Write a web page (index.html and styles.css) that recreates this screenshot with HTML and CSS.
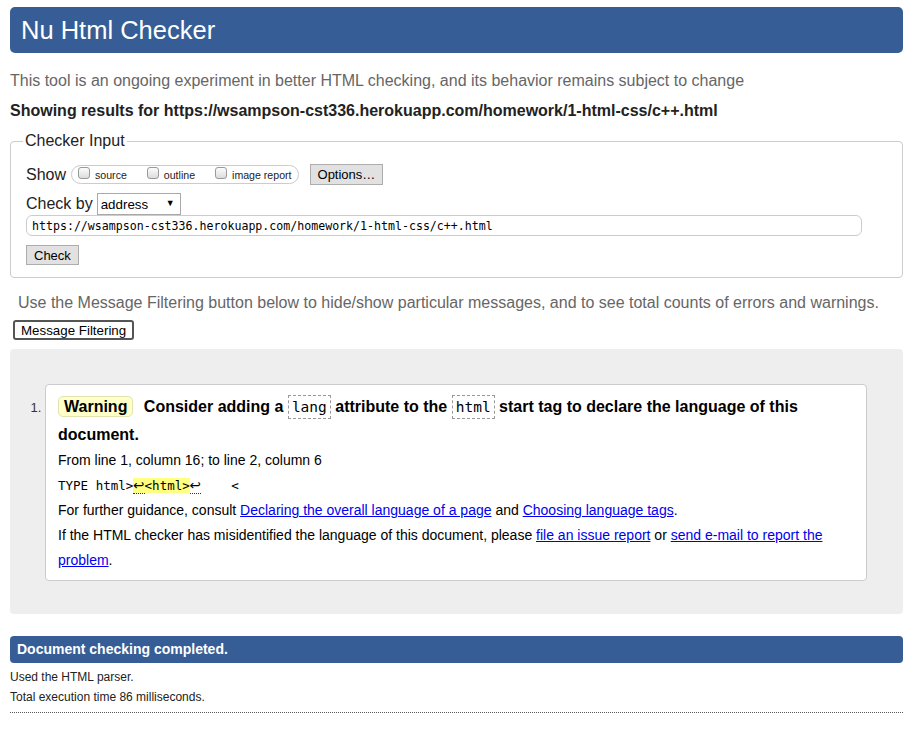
FILE: index.html
```html
<!DOCTYPE html>
<html lang="en">
<head>
<meta charset="utf-8">
<title>Nu Html Checker</title>
<link rel="stylesheet" href="styles.css">
</head>
<body>
<h1 class="title">Nu Html Checker</h1>
<p class="intro">This tool is an ongoing experiment in better HTML checking, and its behavior remains subject to change</p>
<p class="showing">Showing results for https://wsampson-cst336.herokuapp.com/homework/1-html-css/c++.html</p>
<form class="input-form">
  <fieldset class="checker">
    <legend class="legend">Checker Input</legend>
    <div class="row show-row">
      <span class="row-label show-label">Show</span>
      <span class="toggles">
        <label class="toggle"><input type="checkbox" class="cb"><span>source</span></label>
        <label class="toggle"><input type="checkbox" class="cb"><span>outline</span></label>
        <label class="toggle"><input type="checkbox" class="cb"><span>image report</span></label>
      </span>
      <button type="button" class="btn options">Options…</button>
    </div>
    <div class="row by-row">
      <span class="row-label by-label">Check by</span>
      <span class="select-wrap"><select class="select"><option>address</option></select></span>
    </div>
    <input class="url" type="text" value="https://wsampson-cst336.herokuapp.com/homework/1-html-css/c++.html">
    <button type="button" class="btn check">Check</button>
  </fieldset>
</form>
<p class="filter-note">Use the Message Filtering button below to hide/show particular messages, and to see total counts of errors and warnings.</p>
<button type="button" class="filter">Message Filtering</button>
<section class="results">
  <ol class="messages">
    <li class="msg">
      <p class="msg-head"><strong class="badge">Warning</strong> Consider adding a <code class="kw">lang</code> attribute to the <code class="kw">html</code> start tag to declare the language of this document.</p>
      <p class="loc">From line 1, column 16; to line 2, column 6</p>
      <p class="extract"><code class="src">TYPE html&gt;<mark class="hl"><span class="lf">↩</span>&lt;html&gt;</mark><span class="lf">↩</span>    &lt;</code></p>
      <p>For further guidance, consult <a href="#">Declaring the overall language of a page</a> and <a href="#">Choosing language tags</a>.</p>
      <p>If the HTML checker has misidentified the language of this document, please <a href="#">file an issue report</a> or <a href="#">send e-mail to report the problem</a>.</p>
    </li>
  </ol>
</section>
<p class="done">Document checking completed.</p>
<p class="stat first">Used the HTML parser.</p>
<p class="stat">Total execution time 86 milliseconds.</p>
<hr class="dots">
</body>
</html>
```
FILE: styles.css
```css
body {
  margin: 0;
  padding: 7px 16px 20px 10px;
  font-family: "Liberation Sans", Arial, sans-serif;
  color: #000;
  background: #fff;
}

.title {
  margin: 0;
  height: 46px;
  line-height: 46px;
  padding: 0 11px;
  font-size: 25.5px;
  font-weight: normal;
  color: #fff;
  background: #365d95;
  border-radius: 5px;
}

.intro {
  margin: 18px 0 0;
  font-size: 16px;
  line-height: 20px;
  color: #666;
}

.showing {
  margin: 10px 0 0;
  font-size: 16px;
  font-weight: bold;
  line-height: 20px;
  color: #222;
}

.input-form {
  margin: 11px 0 0;
}

.checker {
  margin: 0;
  padding: 14px 15px 12px;
  border: 1px solid #ccc;
  border-radius: 4px;
  min-width: 0;
}

.legend {
  padding: 0 2px;
  margin-left: -3px;
  font-size: 16px;
  line-height: 18px;
  color: #222;
}

.row {
  display: flex;
  align-items: center;
}

.row-label {
  font-size: 16px;
  color: #222;
}

.show-label {
  margin-right: 5px;
}

.by-label {
  margin-right: 4px;
}

.show-row {
  height: 21px;
}

.toggles {
  display: inline-flex;
  align-items: center;
  height: 17px;
  border: 1px solid #ccc;
  border-radius: 10px;
  padding: 0 6px;
}

.toggle {
  display: inline-flex;
  align-items: center;
  font-size: 10.6px;
  color: #222;
  margin-right: 20px;
}

.toggle:last-child {
  margin-right: 0;
}

.cb {
  appearance: none;
  -webkit-appearance: none;
  width: 12px;
  height: 12px;
  margin: 0 5px 4px 0;
  border: 1px solid #999;
  border-radius: 3px;
  background: linear-gradient(#fcfcfc, #dcdcdc);
  box-sizing: border-box;
}

.btn {
  font-family: "Liberation Sans", Arial, sans-serif;
  font-size: 13px;
  background: #e1e1e1;
  border: 1px solid #adadad;
  color: #000;
  border-radius: 0;
  padding: 0 7px;
  height: 21px;
}

.options {
  margin-left: 11px;
}

.by-row {
  margin-top: 8px;
}

.select-wrap {
  position: relative;
  display: inline-block;
  height: 22px;
}

.select-wrap::after {
  content: "▼";
  position: absolute;
  right: 6px;
  top: 5px;
  font-size: 9px;
  color: #000;
  pointer-events: none;
}

.select {
  appearance: none;
  -webkit-appearance: none;
  width: 84px;
  height: 22px;
  margin: 0;
  border: 1px solid #a9a9a9;
  border-radius: 0;
  padding: 0 0 0 3px;
  font-family: "Liberation Sans", Arial, sans-serif;
  font-size: 13.33px;
  background: #fff;
  color: #000;
}

.url {
  display: block;
  box-sizing: border-box;
  width: 836px;
  height: 21px;
  margin: 0;
  padding: 0 5px;
  border: 1px solid #ccc;
  border-radius: 6px;
  font-family: "DejaVu Sans Mono", monospace;
  font-size: 11.6px;
  color: #000;
}

.check {
  display: block;
  margin-top: 9px;
  height: 20px;
}

.filter-note {
  margin: 15px 0 0;
  padding-left: 8px;
  font-size: 16px;
  line-height: 20px;
  color: #666;
}

.filter {
  display: block;
  margin: 7px 0 0 3px;
  height: 20px;
  padding: 0 6px;
  background: #fff;
  border: 2px solid #555;
  border-radius: 3px;
  font-family: "Liberation Sans", Arial, sans-serif;
  font-size: 13.33px;
  color: #000;
}

.results {
  margin-top: 9px;
  background: #eee;
  border-radius: 4px;
  padding: 35px 36px 33px 35px;
}

.messages {
  margin: 0;
  padding: 0;
  list-style: decimal outside;
}

.msg {
  background: #fff;
  border: 1px solid #ccc;
  border-radius: 4px;
  padding: 8px 12px 7px;
  font-size: 14px;
  line-height: 25px;
}

.msg::marker {
  font-size: 13px;
  color: #333;
}

.msg p {
  margin: 0;
}

.msg .msg-head {
  font-size: 16px;
  font-weight: bold;
  line-height: 27px;
}

.badge {
  display: inline-block;
  padding: 0 5px;
  line-height: 19px;
  border: 1px solid #e2e2b0;
  background: #ffffc8;
  border-radius: 5px;
  margin-right: 6px;
}

.kw {
  font-family: "DejaVu Sans Mono", monospace;
  font-weight: normal;
  font-size: 14.5px;
  border: 1px dashed #999;
  padding: 3px 3px;
}

.src {
  font-family: "DejaVu Sans Mono", monospace;
  font-size: 12.5px;
  white-space: pre;
}

.hl {
  background: #ffff80;
  color: inherit;
}

.lf {
  font-family: "DejaVu Sans", sans-serif;
  font-size: 13.5px;
  border-bottom: 1px dotted #333;
}

.msg a {
  color: #00e;
  text-decoration: underline;
}

.done {
  margin: 22px 0 0;
  padding: 0 7px;
  background: #365d95;
  color: #fff;
  font-size: 14px;
  font-weight: bold;
  line-height: 27px;
  border-radius: 4px;
}

.stat {
  margin: 0;
  font-size: 12px;
  line-height: 20px;
  color: #222;
}

.stat.first {
  margin-top: 4px;
}

.dots {
  margin: 5px 0 0;
  border: 0;
  border-top: 1px dotted #555;
  height: 0;
}
```
